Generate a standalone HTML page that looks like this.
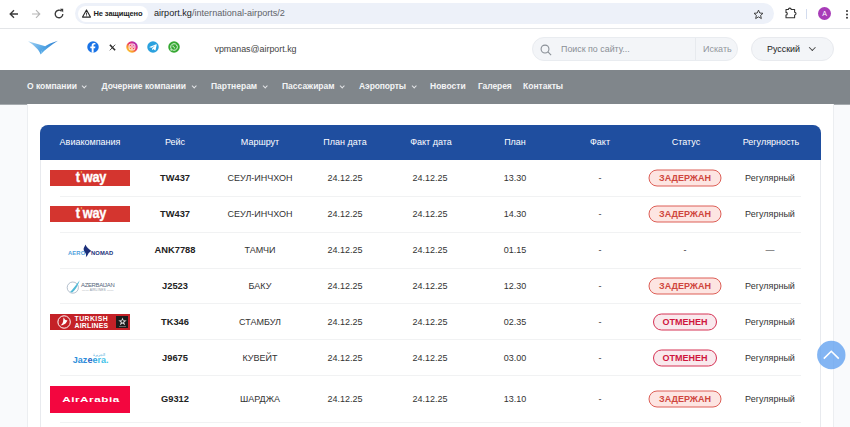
<!DOCTYPE html>
<html lang="ru">
<head>
<meta charset="utf-8">
<title>airport.kg</title>
<style>
*{box-sizing:border-box;margin:0;padding:0}
html,body{width:850px;height:427px;overflow:hidden;background:#f9fafc;font-family:"Liberation Sans",sans-serif;color:#222}
#chrome{position:absolute;left:0;top:0;width:850px;height:29px;background:#fff;border-bottom:1px solid #e3e5e8}
#url{position:absolute;left:75px;top:3px;width:699px;height:21px;border-radius:10.5px;background:#edf1f9}
#sec{position:absolute;left:2.5px;top:2.5px;height:16px;width:70px;border-radius:8px;background:#fff}
#sec span{position:absolute;left:16px;top:3.5px;font-size:7.5px;font-weight:bold;color:#222;white-space:nowrap;letter-spacing:-0.1px}
#urltext{position:absolute;left:79px;top:5px;font-size:9.1px;color:#5f6368;white-space:nowrap}
#urltext b{font-weight:normal;color:#202124}
#header{position:absolute;left:0;top:29px;width:850px;height:41px;background:#fff}
#nav{position:absolute;left:0;top:70px;width:850px;height:34px;background:#80868b;box-shadow:0 1px 0 #a6abaf}
#nav span{position:absolute;top:11px;font-size:8.5px;color:#f3f4f5;white-space:nowrap;font-weight:bold}
#nav i{position:absolute;top:13.5px;width:4.4px;height:4.4px;border-right:1px solid #e4e6e8;border-bottom:1px solid #e4e6e8;transform:rotate(45deg) scale(0.9)}
#card{position:absolute;left:27px;top:104px;width:807px;height:330px;background:#fff;border-left:1px solid #eceef1;border-right:1px solid #eceef1}
#tbl{position:absolute;left:40px;top:125px;width:781px;height:310px;border:1px solid #e8eaee;border-radius:8px 8px 0 0;background:#fff}
#thead{position:absolute;left:40px;top:125px;width:781px;height:35px;background:#1f4e9f;border-radius:8px 8px 0 0}
.th{position:absolute;top:136.5px;font-size:9px;color:#fff;white-space:nowrap;transform:translateX(-50%)}
.row{position:absolute;left:60px;width:741px;height:1px;background:#f1f2f3}
.c{position:absolute;font-size:9px;color:#333;white-space:nowrap;transform:translate(-50%,-50%)}
.c.b{font-weight:bold;color:#222;font-size:9.3px}
.pill{position:absolute;height:17px;border-radius:9px;font-size:9px;font-weight:bold;text-align:center;line-height:15px;transform:translate(-50%,-50%);white-space:nowrap}
.pill.d{width:73px;border:1px solid #dd5f57;background:#fde5e2;color:#cf453d}
.pill.o{width:64px;border:1px solid #d63355;background:#f9e9ed;color:#cf163e}
.logo{position:absolute;left:50px;width:80px;overflow:hidden}
.soc{position:absolute;top:41px;width:12px;height:12px;border-radius:6px}
#search{position:absolute;left:532px;top:37px;width:206px;height:24px;border-radius:12px;background:#f3f5f8;border:1px solid #e9ecf0}
#lang{position:absolute;left:751px;top:37px;width:83px;height:24px;border-radius:12px;background:#f3f5f8;border:1px solid #e8eaee}
</style>
</head>
<body>
<div id="chrome">
  <svg style="position:absolute;left:8px;top:8px" width="12" height="12" viewBox="0 0 12 12"><path d="M10 6H2.5M6 2.2L2.2 6L6 9.8" fill="none" stroke="#3a3a3a" stroke-width="1.35"/></svg>
  <svg style="position:absolute;left:30px;top:8px" width="12" height="12" viewBox="0 0 12 12"><path d="M2 6H9.5M6 2.2L9.8 6L6 9.8" fill="none" stroke="#b5b5b5" stroke-width="1.1"/></svg>
  <svg style="position:absolute;left:53px;top:8px" width="12" height="12" viewBox="0 0 12 12"><path d="M9.8 6A3.8 3.8 0 1 1 8.6 3.2" fill="none" stroke="#3a3a3a" stroke-width="1.35"/><path d="M7 0.8H10.2V4.4Z" fill="#3a3a3a"/></svg>
  <div id="url"><div id="sec"><svg style="position:absolute;left:4px;top:3.5px" width="9" height="9" viewBox="0 0 10 10"><path d="M5 1L9.4 9H0.6Z" fill="none" stroke="#2a2a2a" stroke-width="1.25" stroke-linejoin="round"/><path d="M5 4V6.5M5 7.2V8.1" stroke="#2a2a2a" stroke-width="1"/></svg><span>Не защищено</span></div><div id="urltext"><b>airport.kg</b>/international-airports/2</div>
  <svg style="position:absolute;left:678px;top:5.5px" width="11" height="11" viewBox="0 0 12 12"><path d="M6 1.2L7.4 4.4L10.9 4.7L8.3 7L9.1 10.4L6 8.6L2.9 10.4L3.7 7L1.1 4.7L4.6 4.4Z" fill="none" stroke="#333" stroke-width="1"/></svg>
  </div>
  <svg style="position:absolute;left:785px;top:7px" width="12" height="13" viewBox="0 0 12 13"><path d="M1 2.5H3.4A1.4 1.4 0 0 1 6.2 2.5H9.6V5.2A1.4 1.4 0 0 1 9.6 8V10.7H1V8A1.3 1.3 0 0 0 1 5.4Z" fill="none" stroke="#333" stroke-width="1.1" stroke-linejoin="round"/></svg>
  <div style="position:absolute;left:806px;top:9px;width:1px;height:10px;background:#d3dcee"></div>
  <div style="position:absolute;left:818px;top:7px;width:13px;height:13px;border-radius:7px;background:#a83cb8;color:#fff;font-size:7px;line-height:13.5px;text-align:center">A</div>
  <div style="position:absolute;left:845.5px;top:9.5px;width:2px;height:2px;border-radius:1px;background:#333;box-shadow:0 3.4px 0 #333,0 6.8px 0 #333"></div>
</div>
<div id="header">
</div>
<svg style="position:absolute;left:28px;top:39px" width="32" height="18" viewBox="0 0 32 18"><defs><linearGradient id="lg" x1="0" y1="0" x2="1" y2="0.5"><stop offset="0" stop-color="#a6d4f4"/><stop offset="1" stop-color="#4a9fe2"/></linearGradient><linearGradient id="lg2" x1="0" y1="1" x2="1" y2="0"><stop offset="0" stop-color="#5fb4ec"/><stop offset="1" stop-color="#2f7fd0"/></linearGradient></defs><path d="M0 2.2L17.3 7.2L14 11.5L12.6 15.5C11.3 11 6 6 0 2.2Z" fill="url(#lg)"/><path d="M29.9 1.7C24 3.3 18.5 6 14.8 9L12.6 15.5C17 10.5 24 5.5 29.9 1.7Z" fill="url(#lg2)"/></svg>
<svg style="position:absolute;left:86.7px;top:41px" width="12" height="12" viewBox="0 0 12 12"><circle cx="6" cy="6" r="5.75" fill="#1a73e6"/><path d="M6.6 11.7V7.3H8.1L8.4 5.5H6.6V4.4C6.6 3.8 6.8 3.5 7.6 3.5H8.4V2C8 1.9 7.5 1.9 7 1.9C5.5 1.9 4.7 2.8 4.7 4.3V5.5H3.3V7.3H4.7V11.7Z" fill="#fff"/></svg>
<svg style="position:absolute;left:109px;top:44px" width="7" height="7" viewBox="0 0 10 10"><path d="M1.3 1L8.7 9" fill="none" stroke="#2a2a2a" stroke-width="2.3"/><path d="M8.8 1L1.2 9" fill="none" stroke="#2a2a2a" stroke-width="1.2"/></svg>
<svg style="position:absolute;left:126.3px;top:41px" width="12" height="12" viewBox="0 0 12 12"><defs><linearGradient id="ig" x1="0.1" y1="0.95" x2="0.9" y2="0.05"><stop offset="0" stop-color="#fdd640"/><stop offset="0.3" stop-color="#f9962a"/><stop offset="0.6" stop-color="#e92a76"/><stop offset="1" stop-color="#9435c9"/></linearGradient></defs><circle cx="6" cy="6" r="5.75" fill="url(#ig)"/><rect x="3.1" y="3.1" width="5.8" height="5.8" rx="1.7" fill="none" stroke="#fff" stroke-width="1"/><circle cx="6" cy="6" r="1.35" fill="none" stroke="#fff" stroke-width="0.9"/><circle cx="7.8" cy="4.2" r="0.4" fill="#fff"/></svg>
<svg style="position:absolute;left:147px;top:41px" width="12" height="12" viewBox="0 0 12 12"><circle cx="6" cy="6" r="5.75" fill="#2aa1de"/><path d="M2.4 5.9L9.2 3.2C9.5 3.1 9.8 3.3 9.7 3.7L8.6 9C8.5 9.4 8.2 9.5 7.9 9.3L6.2 8L5.3 8.9C5.2 9 5.1 9 5 8.9L5.2 7.2L8.3 4.4L4.5 6.8L2.5 6.3C2.2 6.2 2.2 6 2.4 5.9Z" fill="#fff"/></svg>
<svg style="position:absolute;left:167.8px;top:41px" width="12" height="12" viewBox="0 0 12 12"><circle cx="6" cy="6" r="5.75" fill="#36a832"/><path d="M6 2.7A3.3 3.3 0 0 0 3.2 7.8L2.8 9.2L4.3 8.8A3.3 3.3 0 1 0 6 2.7Z" fill="none" stroke="#fff" stroke-width="0.85"/><path d="M4.9 4.7C5.1 5.8 5.9 6.7 7.1 7.1" fill="none" stroke="#fff" stroke-width="0.95"/></svg>
<div style="position:absolute;left:214.5px;top:43.5px;font-size:8.9px;color:#444;white-space:nowrap">vpmanas@airport.kg</div>
<div id="search">
  <svg style="position:absolute;left:6.5px;top:5.5px" width="12" height="12" viewBox="0 0 11 11"><circle cx="4.6" cy="4.6" r="3.6" fill="none" stroke="#8a9097" stroke-width="1"/><path d="M7.3 7.3L10.2 10.2" stroke="#8a9097" stroke-width="1"/></svg>
  <span style="position:absolute;left:28px;top:5.5px;font-size:8.9px;color:#8a8f96;white-space:nowrap">Поиск по сайту...</span>
  <div style="position:absolute;left:162px;top:0;width:1px;height:22px;background:#e7eaee"></div>
  <span style="position:absolute;left:170px;top:5.5px;font-size:9px;color:#92979d;white-space:nowrap">Искать</span>
</div>
<div id="lang"><span style="position:absolute;left:15px;top:5.5px;font-size:8.9px;color:#222;white-space:nowrap">Русский</span><i style="position:absolute;left:58px;top:7px;width:4.6px;height:4.6px;border-right:1px solid #444;border-bottom:1px solid #444;transform:rotate(45deg)"></i></div>
<div id="nav">
  <span style="left:27px">О компании</span><i style="left:82px"></i>
  <span style="left:101.5px">Дочерние компании</span><i style="left:192px"></i>
  <span style="left:211px">Партнерам</span><i style="left:263px"></i>
  <span style="left:282px">Пассажирам</span><i style="left:340px"></i>
  <span style="left:359px;letter-spacing:-0.15px">Аэропорты</span><i style="left:411.5px"></i>
  <span style="left:430px">Новости</span>
  <span style="left:478px;letter-spacing:-0.1px">Галерея</span>
  <span style="left:523px">Контакты</span>
</div>
<div id="card"></div>
<div id="tbl"></div>
<div id="thead"></div>
<div class="th" style="left:90px">Авиакомпания</div>
<div class="th" style="left:175px">Рейс</div>
<div class="th" style="left:260px">Маршрут</div>
<div class="th" style="left:345px">План дата</div>
<div class="th" style="left:431px">Факт дата</div>
<div class="th" style="left:515px">План</div>
<div class="th" style="left:600px">Факт</div>
<div class="th" style="left:686px">Статус</div>
<div class="th" style="left:771px">Регулярность</div>
<div class="logo" style="top:170px;height:16px;background:#d4352f"><span style="position:absolute;left:0.5px;width:80px;top:-3.6px;text-align:center;font-size:15.5px;line-height:16px;font-weight:bold;color:#fff;-webkit-text-stroke:0.35px #fff;letter-spacing:-0.2px;transform:scaleX(0.82);white-space:nowrap">t<span style="display:inline-block;width:3.4px;-webkit-text-stroke:0;color:#f2b04a;font-size:9px;vertical-align:5px;letter-spacing:0">&#39;</span>way</span></div>
<div class="c b" style="left:175px;top:178px">TW437</div>
<div class="c" style="left:260px;top:178px">СЕУЛ-ИНЧХОН</div>
<div class="c" style="left:345px;top:178px">24.12.25</div>
<div class="c" style="left:430px;top:178px">24.12.25</div>
<div class="c" style="left:515px;top:178px">13.30</div>
<div class="c" style="left:600px;top:178px">-</div>
<div class="pill d" style="left:685px;top:178px">ЗАДЕРЖАН</div>
<div class="c" style="left:770px;top:178px">Регулярный</div>
<div class="logo" style="top:206px;height:16px;background:#d4352f"><span style="position:absolute;left:0.5px;width:80px;top:-3.6px;text-align:center;font-size:15.5px;line-height:16px;font-weight:bold;color:#fff;-webkit-text-stroke:0.35px #fff;letter-spacing:-0.2px;transform:scaleX(0.82);white-space:nowrap">t<span style="display:inline-block;width:3.4px;-webkit-text-stroke:0;color:#f2b04a;font-size:9px;vertical-align:5px;letter-spacing:0">&#39;</span>way</span></div>
<div class="c b" style="left:175px;top:214px">TW437</div>
<div class="c" style="left:260px;top:214px">СЕУЛ-ИНЧХОН</div>
<div class="c" style="left:345px;top:214px">24.12.25</div>
<div class="c" style="left:430px;top:214px">24.12.25</div>
<div class="c" style="left:515px;top:214px">14.30</div>
<div class="c" style="left:600px;top:214px">-</div>
<div class="pill d" style="left:685px;top:214px">ЗАДЕРЖАН</div>
<div class="c" style="left:770px;top:214px">Регулярный</div>
<div class="logo" style="top:242px;height:17px"><span style="position:absolute;left:18px;top:8px;font-size:5.8px;color:#4f9fdd;font-weight:bold;white-space:nowrap;letter-spacing:0.15px">AERO</span><span style="position:absolute;left:41px;top:8px;font-size:5.8px;color:#1c2f7a;font-weight:bold;white-space:nowrap;letter-spacing:0.1px">NOMAD</span><svg style="position:absolute;left:32px;top:1.5px" width="11" height="14" viewBox="0 0 11 14"><path d="M3.3 0.6C4.4 3.2 6.8 5.2 9.4 6.9C8.2 7.6 7 8.4 6.4 9.6C5.8 11 5 12.2 3.8 13.2C4.4 11 4 9.4 2.8 8C1.4 6.4 1.3 4.6 2.1 3.2C2.7 2.4 3.1 1.6 3.3 0.6Z" fill="#1c2f7a"/></svg></div>
<div class="c b" style="left:175px;top:250px">ANK7788</div>
<div class="c" style="left:260px;top:250px">ТАМЧИ</div>
<div class="c" style="left:345px;top:250px">24.12.25</div>
<div class="c" style="left:430px;top:250px">24.12.25</div>
<div class="c" style="left:515px;top:250px">01.15</div>
<div class="c" style="left:600px;top:250px">-</div>
<div class="c" style="left:685px;top:250px">-</div>
<div class="c" style="left:770px;top:250px">—</div>
<div class="logo" style="top:278px;height:16px"><svg style="position:absolute;left:16px;top:1.5px" width="15" height="14" viewBox="0 0 15 14"><ellipse cx="6.8" cy="7.6" rx="5.6" ry="5.6" fill="none" stroke="#93a5b8" stroke-width="0.7"/><path d="M4 12C6.5 9.5 9.5 5.5 13.7 0.2C12 5.5 9.5 9.8 6.2 12.6Z" fill="#52b9d6"/></svg><span style="position:absolute;left:31px;top:4px;font-size:5.9px;color:#56677a;white-space:nowrap;letter-spacing:-0.3px">AZERBAIJAN</span><span style="position:absolute;left:32px;top:10.3px;font-size:3.2px;color:#8a96a3;white-space:nowrap;letter-spacing:0.2px">—— AIRLINES ——</span></div>
<div class="c b" style="left:175px;top:286px">J2523</div>
<div class="c" style="left:260px;top:286px">БАКУ</div>
<div class="c" style="left:345px;top:286px">24.12.25</div>
<div class="c" style="left:430px;top:286px">24.12.25</div>
<div class="c" style="left:515px;top:286px">12.30</div>
<div class="c" style="left:600px;top:286px">-</div>
<div class="pill d" style="left:685px;top:286px">ЗАДЕРЖАН</div>
<div class="c" style="left:770px;top:286px">Регулярный</div>
<div class="logo" style="top:314px;height:16px;background:#c42127"><svg style="position:absolute;left:7px;top:1px" width="14" height="14" viewBox="0 0 14 14"><circle cx="7.1" cy="7" r="6.2" fill="#c42127" stroke="#fff" stroke-width="1"/><path d="M3.4 10.2C5.2 9.4 6.2 7.6 6.3 4.4C6.3 3.4 6.5 2.8 7 2.6C7.4 4.6 8.2 5.4 10.4 5.2C9.6 7.8 7.4 10.4 3.4 10.2Z" fill="#fff"/></svg><span style="position:absolute;left:24.5px;top:1px;font-size:6.9px;line-height:7px;font-weight:bold;color:#fff;white-space:nowrap;letter-spacing:0.2px"><span style="letter-spacing:0.42px">TURKISH</span><br>AIRLINES</span><div style="position:absolute;left:66px;top:2px;width:12px;height:12px;background:#1b1b1b"></div><svg style="position:absolute;left:67.5px;top:2.8px" width="9" height="9" viewBox="0 0 10 10"><path d="M5 0.6L6.2 3.7L9.6 3.8L6.9 5.9L7.9 9.2L5 7.3L2.1 9.2L3.1 5.9L0.4 3.8L3.8 3.7Z" fill="#d9d9d9"/><path d="M5 3.4L6.3 4.4L5.8 6H4.2L3.7 4.4Z" fill="#1b1b1b"/></svg><div style="position:absolute;left:68.5px;top:12px;width:7px;height:0.8px;background:#666"></div></div>
<div class="c b" style="left:175px;top:322px">TK346</div>
<div class="c" style="left:260px;top:322px">СТАМБУЛ</div>
<div class="c" style="left:345px;top:322px">24.12.25</div>
<div class="c" style="left:430px;top:322px">24.12.25</div>
<div class="c" style="left:515px;top:322px">02.35</div>
<div class="c" style="left:600px;top:322px">-</div>
<div class="pill o" style="left:685px;top:322px">ОТМЕНЕН</div>
<div class="c" style="left:770px;top:322px">Регулярный</div>
<div class="logo" style="top:350px;height:16px"><span style="position:absolute;left:22.8px;top:4.8px;font-size:9px;font-weight:bold;color:#2e8edb;white-space:nowrap;letter-spacing:0.02px">Jaz<span style="color:#2a62c4">e</span><span style="color:#2f9fe0">e</span><span style="color:#43c3ea">ra.</span></span><span style="position:absolute;left:42.5px;top:3.2px;font-size:3.8px;line-height:4px;color:#3aa6d8;white-space:nowrap">الجزيرة</span></div>
<div class="c b" style="left:175px;top:358px">J9675</div>
<div class="c" style="left:260px;top:358px">КУВЕЙТ</div>
<div class="c" style="left:345px;top:358px">24.12.25</div>
<div class="c" style="left:430px;top:358px">24.12.25</div>
<div class="c" style="left:515px;top:358px">03.00</div>
<div class="c" style="left:600px;top:358px">-</div>
<div class="pill o" style="left:685px;top:358px">ОТМЕНЕН</div>
<div class="c" style="left:770px;top:358px">Регулярный</div>
<div class="logo" style="top:386px;height:27px;background:#f3063f"><span style="position:absolute;left:0.5px;width:80px;top:9px;text-align:center;font-size:6.5px;line-height:9px;font-weight:bold;color:#fff;letter-spacing:0.3px;transform:scaleX(1.8)">AirArabia</span></div>
<div class="c b" style="left:175px;top:399px">G9312</div>
<div class="c" style="left:260px;top:399px">ШАРДЖА</div>
<div class="c" style="left:345px;top:399px">24.12.25</div>
<div class="c" style="left:430px;top:399px">24.12.25</div>
<div class="c" style="left:515px;top:399px">13.10</div>
<div class="c" style="left:600px;top:399px">-</div>
<div class="pill d" style="left:685px;top:399px">ЗАДЕРЖАН</div>
<div class="c" style="left:770px;top:399px">Регулярный</div>
<div class="row" style="top:196px"></div>
<div class="row" style="top:232px"></div>
<div class="row" style="top:268px"></div>
<div class="row" style="top:303px"></div>
<div class="row" style="top:339px"></div>
<div class="row" style="top:375px"></div>
<div class="row" style="top:422px"></div>
<svg id="up" style="position:absolute;left:815px;top:338px" width="34" height="34" viewBox="0 0 34 34"><circle cx="16.3" cy="17" r="14.2" fill="rgba(96,160,240,0.78)"/><path d="M8.8 20.6L16.3 13.3L23.8 20.6" fill="none" stroke="#fff" stroke-width="1.6"/></svg>
</body>
</html>
